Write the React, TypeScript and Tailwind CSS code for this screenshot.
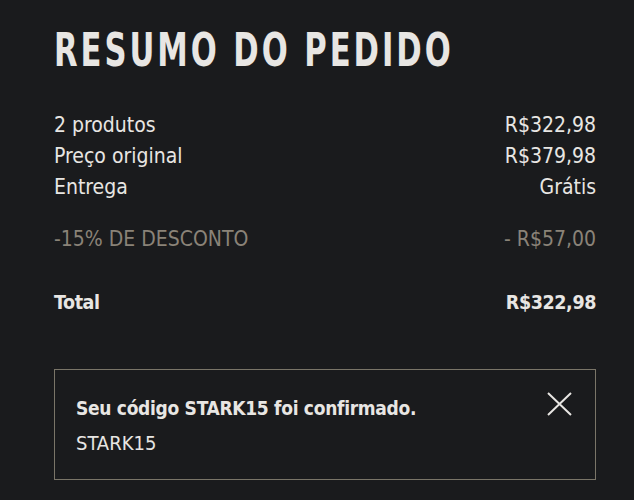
const rows = [
  { label: "2 produtos", value: "R$322,98" },
  { label: "Preço original", value: "R$379,98" },
  { label: "Entrega", value: "Grátis" },
];

export default function App() {
  return (
    <div className="min-h-[500px] w-full bg-[#1a1b1d] pl-[54px] pr-[38px] pt-[24px] text-[#e8e6e3] [font-family:'DejaVu_Sans_Condensed','DejaVu_Sans',sans-serif]">
      <h2 className="origin-left scale-x-[0.74] whitespace-nowrap text-[46px] font-bold leading-[52px] tracking-[4px]">
        RESUMO DO PEDIDO
      </h2>

      <div className="mt-[34px] flex flex-col text-[21px] leading-[31px]">
        {rows.map((r) => (
          <div key={r.label} className="flex justify-between">
            <span>{r.label}</span>
            <span>{r.value}</span>
          </div>
        ))}
        <div className="mt-[21px] flex justify-between text-[#8a8378]">
          <span>-15% DE DESCONTO</span>
          <span>- R$57,00</span>
        </div>
        <div className="mt-[32px] flex justify-between text-[19.5px] font-bold tracking-[-0.4px]">
          <span>Total</span>
          <span>R$322,98</span>
        </div>
      </div>

      <div className="mt-[51px] flex items-start justify-between border border-[#7a7568] pb-[18px] pl-[21px] pr-[23px] pt-[21px]">
        <div className="flex flex-col text-[20px] leading-[35px]">
          <span className="text-[19px] font-bold tracking-[-0.3px]">Seu código STARK15 foi confirmado.</span>
          <span>STARK15</span>
        </div>
        <button className="mt-[1px] text-[#e8e6e3]">
          <svg width="25" height="24" viewBox="0 0 25 24" fill="none" stroke="currentColor" strokeWidth="2">
            <path d="M1 1L24 23M24 1L1 23" />
          </svg>
        </button>
      </div>
    </div>
  );
}
